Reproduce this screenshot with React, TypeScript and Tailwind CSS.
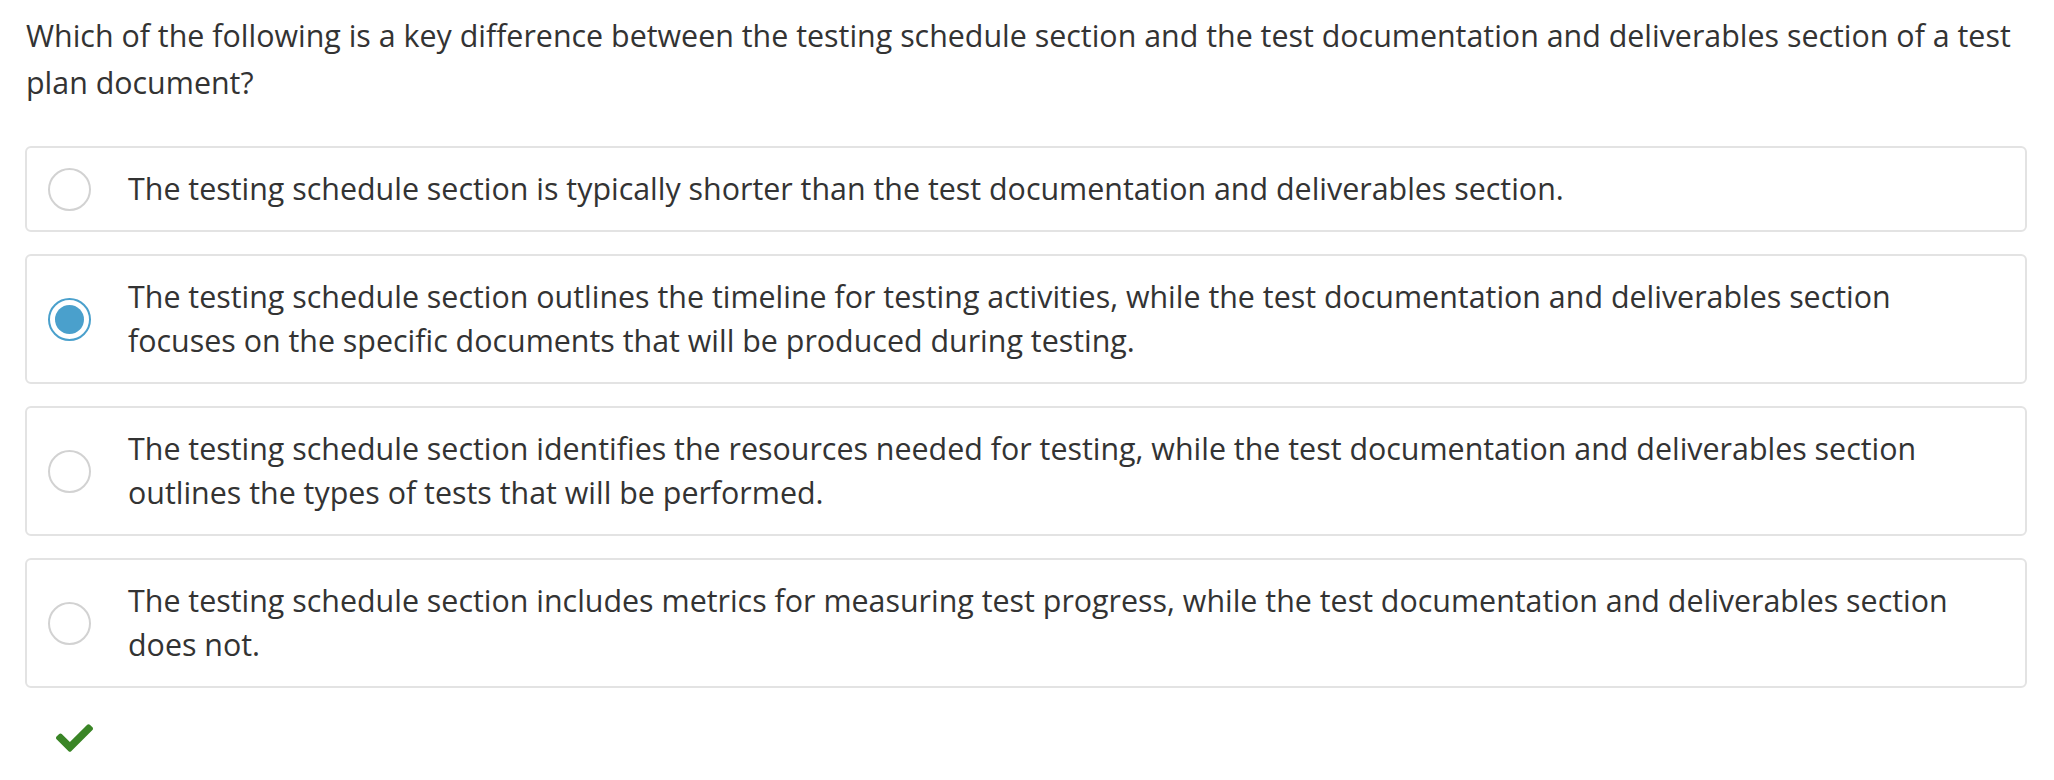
const question =
  "Which of the following is a key difference between the testing schedule section and the test documentation and deliverables section of a test plan document?";

const options = [
  "The testing schedule section is typically shorter than the test documentation and deliverables section.",
  "The testing schedule section outlines the timeline for testing activities, while the test documentation and deliverables section focuses on the specific documents that will be produced during testing.",
  "The testing schedule section identifies the resources needed for testing, while the test documentation and deliverables section outlines the types of tests that will be performed.",
  "The testing schedule section includes metrics for measuring test progress, while the test documentation and deliverables section does not.",
];

const selected = 1;

function Radio({ checked }: { checked: boolean }) {
  if (checked) {
    return (
      <span className="flex h-[43px] w-[43px] shrink-0 items-center justify-center rounded-full border-2 border-[#4aa0cc] bg-white">
        <span className="h-[29px] w-[29px] rounded-full bg-[#4aa0cc]" />
      </span>
    );
  }
  return <span className="h-[43px] w-[43px] shrink-0 rounded-full border-2 border-[#d2d2d2] bg-white" />;
}

export default function App() {
  return (
    <div
      className="min-h-screen bg-white pl-[25px] pr-[27px] pt-[12px] text-[#333]"
      style={{ fontFamily: '"Open Sans", sans-serif' }}
    >
      <p className="pl-px text-[30.4px] leading-[47px]">{question}</p>

      <div className="mt-[40px] flex flex-col gap-[22px]">
        {options.map((text, i) => (
          <label
            key={i}
            className="flex items-center gap-[37px] rounded-[6px] border-2 border-[#e3e3e3] py-[19px] pl-[21px] pr-[50px]"
          >
            <Radio checked={i === selected} />
            <span className="text-[30.4px] leading-[44px]">{text}</span>
          </label>
        ))}
      </div>

      <div className="mt-[36px] pl-[31px]">
        <svg width="37" height="28" viewBox="0 68 512 376" fill="#3a8526">
          <path d="M173.898 439.404l-166.4-166.4c-9.997-9.997-9.997-26.206 0-36.204l36.203-36.204c9.997-9.998 26.207-9.998 36.204 0L192 312.69 432.095 72.596c9.997-9.997 26.207-9.997 36.204 0l36.203 36.204c9.997 9.997 9.997 26.206 0 36.204l-294.4 294.401c-9.998 9.997-26.207 9.997-36.204-.001z" />
        </svg>
      </div>
    </div>
  );
}
